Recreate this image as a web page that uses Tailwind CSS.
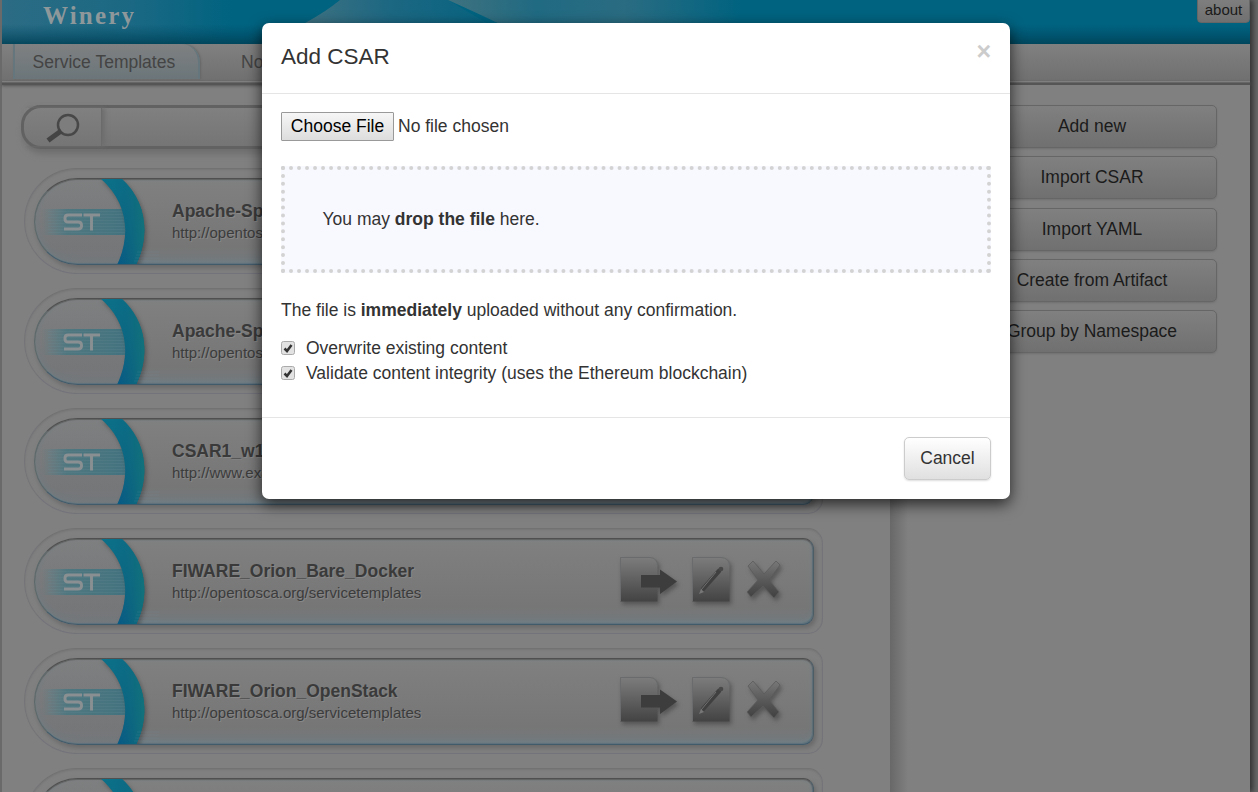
<!DOCTYPE html>
<html lang="en">
<head>
<meta charset="utf-8">
<title>Winery</title>
<script src="https://cdn.jsdelivr.net/npm/@tailwindcss/browser@4"></script>
</head>
<body class="relative h-[792px] w-[1258px] overflow-hidden bg-[#666] font-['Liberation_Sans',Arial,sans-serif] text-[#3a3a3a]">

<svg class="absolute size-0" aria-hidden="true">
  <defs>
    <linearGradient id="band" x1="0" x2="1" y1="0" y2="0"><stop offset="0" stop-color="#537f88" stop-opacity="0"/><stop offset=".3" stop-color="#4f7780"/><stop offset="1" stop-color="#43737f"/></linearGradient>
    <linearGradient id="disc" x1="0" x2="0" y1="0" y2="1"><stop offset="0" stop-color="#7d7f80"/><stop offset=".5" stop-color="#77797c"/><stop offset="1" stop-color="#747679"/></linearGradient>
    <linearGradient id="ribbon" x1="0" x2="0" y1="0" y2="1"><stop offset="0" stop-color="#0c7088"/><stop offset=".5" stop-color="#0b6884"/><stop offset="1" stop-color="#075884"/></linearGradient>
    <linearGradient id="ribbonEdge" x1="0" x2="1" y1="0" y2="0"><stop offset=".3" stop-color="#0b5f82" stop-opacity="0"/><stop offset="1" stop-color="#12727a"/></linearGradient>
    <linearGradient id="doc" x1="0" x2="0" y1="0" y2="1"><stop offset="0" stop-color="#7c7c7c"/><stop offset=".4" stop-color="#666"/><stop offset="1" stop-color="#434343"/></linearGradient>
    <linearGradient id="cross" x1="0" x2="0" y1="0" y2="1"><stop offset="0" stop-color="#787878"/><stop offset=".5" stop-color="#5a5a5a"/><stop offset="1" stop-color="#404040"/></linearGradient>
    <pattern id="lines" width="4" height="3" patternUnits="userSpaceOnUse"><rect width="4" height="1" fill="#6a8e96" opacity=".2"/></pattern>
    <filter id="soft" x="-30%" y="-30%" width="170%" height="170%" color-interpolation-filters="sRGB"><feDropShadow dx="2" dy="3" stdDeviation="2" flood-color="#333" flood-opacity=".5"/></filter>
  </defs>
  <symbol id="emblem" viewBox="0 0 125 87">
    <path d="M66 2C96 26 96 60 83 85H44A42 41 0 0 1 44 2Z" fill="url(#disc)" opacity=".6"/>
    <rect x="8" y="31" width="83" height="26" fill="url(#band)"/>
    <rect x="14" y="31" width="77" height="26" fill="url(#lines)"/>
    <path d="M48 37H34Q31 37 31 40V41Q31 44 34 44H44Q47.500 44 47.500 47V48Q47.500 51 44 51H30M49.500 37H66M57.500 37V52.500" fill="none" stroke="#8a9092" stroke-width="2.900"/>
    <path d="M66 0H87C115 25 115 61 102 87H83C96 60 96 26 66 0Z" fill="url(#ribbon)" filter="url(#soft)"/>
    <path d="M66 0H87C115 25 115 61 102 87H83C96 60 96 26 66 0Z" fill="url(#ribbonEdge)"/>
    <path d="M103 74H125M102 77H125M101 80H125M100 83H125" stroke="#7795a5" stroke-width="1" opacity=".18"/>
  </symbol>
  <symbol id="actions" viewBox="0 0 170 55">
    <g filter="url(#soft)">
      <path d="M3.500 3.500H33Q40.500 4 40.500 12V47.500H3.500Z" fill="url(#doc)"/>
      <path d="M3.500 47V3.500H33Q40.500 4 40.500 12" fill="none" stroke="#696b6d"/>
      <path d="M24 21H43V15.500L60 27.500L43 40V33.500H24Z" fill="#3d3d3d"/>
    </g>
    <g filter="url(#soft)">
      <path d="M75.500 3.500H104Q112.500 4 112.500 12V47.500H75.500Z" fill="url(#doc)"/>
      <path d="M75.500 47V3.500H104Q112.500 4 112.500 12" fill="none" stroke="#696b6d"/>
      <path d="M86 35L102 17" stroke="#404040" stroke-width="4.500" stroke-linecap="round"/>
      <path d="M84 36L99 18" stroke="#707070" stroke-width="1"/>
      <path d="M82 40L84 35L87 38Z" fill="#777"/><circle cx="104" cy="15" r="2.300" fill="#484848"/>
    </g>
    <path d="M136 7L147 20L159 7L163 11L152 26L162 38L157 44L146 32L134 43L130 38L141 26L131 12Z" fill="url(#cross)" stroke="#5c5c5c" stroke-width=".8" filter="url(#soft)"/>
  </symbol>
</svg>

<div class="flex h-[792px] w-[1250px] flex-col bg-[#808080] shadow-[3px_0_5px_#333]">
  <div class="flex h-full flex-col border-l-2 border-[#6a6a6a]">
  <header class="relative h-[44px] shrink-0 overflow-hidden bg-[#006380]">
    <svg class="block h-[44px] w-[1248px]" viewBox="0 0 1248 44" preserveAspectRatio="none">
      <defs>
        <linearGradient id="h1"><stop offset="0" stop-color="#2c6c84"/><stop offset=".6" stop-color="#196883"/><stop offset="1" stop-color="#006380"/></linearGradient>
        <linearGradient id="h2"><stop offset="0" stop-color="#507782"/><stop offset=".5" stop-color="#1c6782"/><stop offset="1" stop-color="#006380"/></linearGradient>
        <linearGradient id="h3"><stop offset="0" stop-color="#3f727f"/><stop offset=".3" stop-color="#206a82"/><stop offset=".6" stop-color="#2a6c82"/><stop offset="1" stop-color="#006380"/></linearGradient>
        <linearGradient id="h4" x1="0" x2="0" y1="0" y2="1"><stop offset="0" stop-color="#004a66" stop-opacity="0"/><stop offset="1" stop-color="#004055" stop-opacity=".85"/></linearGradient>
      </defs>
      <rect width="230" height="44" fill="url(#h1)"/>
      <path d="M258 44Q310 23 338 0H446L520 44Z" fill="url(#h2)"/>
      <path d="M446 0Q475 13 500 25L540 44H740V0Z" fill="url(#h3)"/>
      <rect y="24" width="1248" height="20" fill="url(#h4)"/>
      <text x="41" y="24" textLength="91" font-family="Liberation Serif, serif" font-weight="bold" font-size="25" fill="#8e989b">Winery</text>
    </svg>
    <a class="absolute top-[-4px] right-0 flex h-[27px] w-[53px] items-center justify-center rounded-b-sm border border-[#666] bg-linear-to-b from-[#808080] to-[#707070] text-[15px] leading-none text-[#1a1a1a]">about</a>
  </header>
  <nav class="flex h-[37px] shrink-0 bg-linear-to-b from-[#808080] to-[#707070] pl-[11px] text-[17.5px] leading-[36px] text-[#444]">
    <span class="h-[35px] w-[187px] rounded-tr-[18px] border-x-2 border-[#65777d] bg-linear-to-b from-[#7f8081] to-[#6b767a] pl-[17.5px] shadow-[1px_0_2px_#666]">Service Templates</span>
    <span class="ml-[41px]">Node Types</span>
  </nav>
  <div class="h-[4px] shrink-0 border-t border-b-2 border-t-[#7f7f7f] border-b-[#555] bg-[#666] shadow-[0_1px_3px_#555]"></div>
  <main class="flex min-h-0 flex-1">
    <section class="w-[888px] shrink-0 overflow-hidden pt-[20px] pl-[19px]">
      <div class="flex h-[44px] w-[800px] rounded-[20px] border-[3px] border-[#626262] bg-linear-to-b from-[#808080] to-[#757575] shadow-[2px_5px_6px_#6e6e6e]">
        <div class="flex w-[78px] items-center border-r border-[#6b6b6b] pl-[20px] shadow-[3px_0_4px_#6e6e6e]">
          <svg class="h-[32px] w-[36px]" viewBox="0 0 36 32"><circle cx="24" cy="14" r="10" fill="#7d7d7d" stroke="#484848" stroke-width="2.500"/><path d="M17 20L4 29.500" stroke="#444" stroke-width="5"/></svg>
        </div>
      </div>
      <div id="rows" class="mt-[19px] flex flex-col gap-[14px] pl-[3px]"></div>
    </section>
    <aside class="flex flex-1 flex-col gap-[8.3px] bg-linear-to-r from-[#686868] from-0% to-[#808080] to-[5%] pt-[20px] pl-[75px]">
      <button class="h-[43px] w-[252px] rounded-[5px] border border-[#666] bg-linear-to-b from-[#808080] to-[#707070] pl-0.5 text-[17.5px] text-[#1b1b1b] shadow-[0_1px_2px_#707070]">Add new</button>
      <button class="h-[43px] w-[252px] rounded-[5px] border border-[#666] bg-linear-to-b from-[#808080] to-[#707070] pb-0.5 pl-0.5 text-[17.5px] text-[#1b1b1b] shadow-[0_1px_2px_#707070]">Import CSAR</button>
      <button class="h-[43px] w-[252px] rounded-[5px] border border-[#666] bg-linear-to-b from-[#808080] to-[#707070] pl-0.5 text-[17.5px] text-[#1b1b1b] shadow-[0_1px_2px_#707070]">Import YAML</button>
      <button class="h-[43px] w-[252px] rounded-[5px] border border-[#666] bg-linear-to-b from-[#808080] to-[#707070] pl-0.5 text-[17.5px] text-[#1b1b1b] shadow-[0_1px_2px_#707070]">Create from Artifact</button>
      <button class="h-[43px] w-[252px] rounded-[5px] border border-[#666] bg-linear-to-b from-[#808080] to-[#707070] pb-0.5 pl-0.5 text-[17.5px] text-[#1b1b1b] shadow-[0_1px_2px_#707070]">Group by Namespace</button>
    </aside>
  </main>
  </div>
</div>

<div class="absolute top-[23px] left-[262px] flex h-[476px] w-[748px] flex-col rounded-[7px] bg-white text-[17.5px] text-[#333] shadow-[0_5px_15px_rgba(0,0,0,0.7)]">
  <div class="flex h-[71px] shrink-0 justify-between border-b border-[#e5e5e5] px-[19px] pt-[18px]">
    <h4 class="text-[22.5px] leading-8">Add CSAR</h4>
    <button class="h-5 text-[25px] leading-5 font-bold text-[#ccc]">×</button>
  </div>
  <div class="flex h-[324px] shrink-0 flex-col border-b border-[#e5e5e5] px-[19px] pt-[18px]">
    <div class="flex h-[29px] items-center gap-1">
      <button class="h-[29px] w-[113px] rounded-[1px] border border-[#999] bg-linear-to-b from-[#f6f6f6] to-[#dddddd] text-[17.5px] leading-none text-black">Choose File</button>
      <span>No file chosen</span>
    </div>
    <div class="mt-[25px] flex h-[107px] items-center border-4 border-dotted border-[#d3d3d3] bg-[#f8f8ff] pl-[37.5px]"><p>You may <b>drop the file</b> here.</p></div>
    <p class="mt-6 leading-[26px]">The file is <b>immediately</b> uploaded without any confirmation.</p>
    <div class="mt-[13px] flex flex-col leading-[25px]">
      <label class="flex items-center gap-[11px]"><svg class="mb-0.5 size-[14px]" viewBox="0 0 14 14"><rect x=".5" y=".5" width="13" height="13" rx="2" fill="#e2e2e2" stroke="#aaa"/><path d="M3.500 7.500L6 10L10.500 4" fill="none" stroke="#333" stroke-width="2.500"/></svg>Overwrite existing content</label>
      <label class="flex items-center gap-[11px]"><svg class="mb-0.5 size-[14px]" viewBox="0 0 14 14"><rect x=".5" y=".5" width="13" height="13" rx="2" fill="#e2e2e2" stroke="#aaa"/><path d="M3.500 7.500L6 10L10.500 4" fill="none" stroke="#333" stroke-width="2.500"/></svg>Validate content integrity (uses the Ethereum blockchain)</label>
    </div>
  </div>
  <div class="flex justify-end px-[19px] pt-[19px]">
    <button class="h-[43px] w-[87px] rounded-[5px] border border-[#ccc] bg-linear-to-b from-white to-[#e0e0e0] text-[17.5px] text-[#333] shadow-[0_1px_2px_#ddd]">Cancel</button>
  </div>
</div>

<script>
const items = [
  ['Apache-Spark', 'http://opentosca.org/servicetemplates'],
  ['Apache-Spark', 'http://opentosca.org/servicetemplates'],
  ['CSAR1_w1', 'http://www.example.org'],
  ['FIWARE_Orion_Bare_Docker', 'http://opentosca.org/servicetemplates'],
  ['FIWARE_Orion_OpenStack', 'http://opentosca.org/servicetemplates'],
  ['', '']
];
document.getElementById('rows').innerHTML = items.map(([name, ns]) => `
  <article class="h-[106px] w-[799px] shrink-0 rounded-l-[53px] rounded-r-[15px] border border-t-[#727272] border-r-[#737379] border-b-[#73737b] border-l-[#747478] p-[9px] shadow-[inset_0_1px_2px_#757575]">
    <div class="flex h-[87px] w-[780px] overflow-hidden rounded-l-[44px] rounded-r-[11px] border border-t-[#505050] border-r-[#4d5d66] border-b-[#425b6b] border-l-[#5c686a] bg-linear-to-b from-[#808080] via-[#767676] via-80% to-[#74797d] shadow-[2px_3px_5px_#686868,inset_0_1px_1px_#606060,inset_-1px_-1px_1px_#5c717c,inset_1px_-2px_6px_#6c8188]">
      <svg class="-mt-px -ml-px h-[87px] w-[125px] shrink-0"><use href="#emblem"/></svg>
      <div class="w-[457px] pt-[21px] pl-[13px] [text-shadow:1px_1px_0_#888]">
        <h3 class="text-[17.5px] leading-[22px] font-bold text-[#3a3a3a]">${name}</h3>
        <p class="text-[15px] leading-[22px] text-[#3c3c3c]">${ns}</p>
      </div>
      <svg class="mt-[15px] ml-px h-[55px] w-[170px] shrink-0"><use href="#actions"/></svg>
    </div>
  </article>`).join('');
</script>
</body>
</html>
